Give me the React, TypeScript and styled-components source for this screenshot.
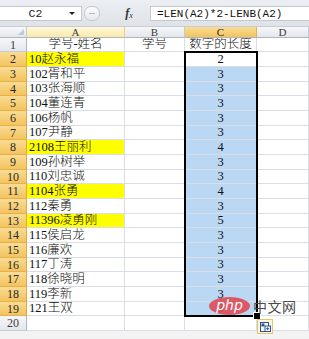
import React from 'react';
import styled, { createGlobalStyle, css } from 'styled-components';

const GlobalStyle = createGlobalStyle`
  html, body { margin: 0; padding: 0; background: #fff; }
  body { font-family: "Liberation Serif", "Noto Sans CJK SC", serif; }
  #root { width: 309px; height: 339px; }
`;

const Page = styled.div`
  position: relative;
  width: 309px;
  height: 339px;
  overflow: hidden;
  background: #f3f3f3;
  display: flex;
  flex-direction: column;
`;

const FormulaStrip = styled.div`
  height: 27px;
  box-sizing: border-box;
  padding: 6px 0 5px;
  background: linear-gradient(#eceff3, #dfe3e8);
  border-bottom: 1px solid #c9ced5;
  display: flex;
  align-items: stretch;
`;

const NameBox = styled.div`
  width: 82px;
  box-sizing: border-box;
  background: #fff;
  border: 1px solid #c3c8cf;
  border-left: none;
  display: flex;
  align-items: center;
  font-family: "Liberation Mono", monospace;
  font-size: 11.5px;
  color: #222;
`;

const NameText = styled.span`
  flex: 1;
  text-align: center;
  padding-left: 2px;
`;

const DropArrow = styled.span`
  width: 0;
  height: 0;
  margin-right: 6px;
  border-left: 3px solid transparent;
  border-right: 3px solid transparent;
  border-top: 3px solid #222;
`;

const Splitter = styled.div`
  width: 14px;
  margin-left: 2px;
  border-radius: 7px;
  border: 1px solid #c2c7ce;
  background: linear-gradient(#fbfbfc, #e6e9ed);
  display: flex;
  align-items: center;
  justify-content: center;
  &::after {
    content: '';
    width: 6px;
    height: 1px;
    background: #b5bbc3;
  }
`;

const FxBox = styled.div`
  width: 50px;
  display: flex;
  align-items: center;
  justify-content: center;
  font-family: "Liberation Serif", serif;
  font-style: italic;
  font-weight: bold;
  font-size: 12px;
  color: #333;
  padding-left: 8px;
  box-sizing: border-box;
`;

const FxSub = styled.span`
  font-size: 8px;
  font-weight: normal;
  margin-top: 3px;
`;

const FormulaInput = styled.div`
  flex: 1;
  background: #fff;
  border: 1px solid #c3c8cf;
  border-right: none;
  display: flex;
  align-items: center;
  padding-left: 6px;
  font-family: "Liberation Mono", monospace;
  font-size: 11px;
  color: #111;
`;

const Sheet = styled.div<{ $rows: string }>`
  position: relative;
  display: grid;
  grid-template-columns: 27px 98px 60px 72px 52px;
  grid-template-rows: ${(p) => p.$rows};
  background: #fff;
`;

type HeadState = 'plain' | 'sel' | 'hover';

const headBg = {
  plain: css`
    background: linear-gradient(#f6f7f9, #e3e7ec);
    border-color: #c6ccd4;
    color: #3c3c3c;
  `,
  sel: css`
    background: linear-gradient(#f9dc94, #f3c35e);
    border-color: #e8b04a;
    color: #2a2a2a;
  `,
  hover: css`
    background: linear-gradient(#fff8dc, #fbe9a8);
    border-color: #e9cf86;
    color: #3c3c3c;
  `,
};

const Corner = styled.div`
  position: relative;
  box-sizing: border-box;
  background: linear-gradient(#f6f7f9, #e3e7ec);
  border-right: 1px solid #c6ccd4;
  border-bottom: 1px solid #aeb6c0;
  &::after {
    content: '';
    position: absolute;
    right: 2px;
    bottom: 2px;
    border-left: 6px solid transparent;
    border-bottom: 6px solid #c5cad1;
  }
`;

const ColHead = styled.div<{ $state: HeadState }>`
  box-sizing: border-box;
  border-right: 1px solid;
  border-bottom: 1px solid;
  ${(p) => headBg[p.$state]}
  border-bottom-color: #aeb6c0;
  display: flex;
  align-items: center;
  justify-content: center;
  font-family: "Liberation Serif", serif;
  font-size: 11px;
  line-height: 1;
`;

const RowHead = styled.div<{ $state: HeadState }>`
  box-sizing: border-box;
  border-right: 1px solid #aeb6c0;
  border-bottom: 1px solid;
  ${(p) => headBg[p.$state]}
  border-right-color: ${(p) => (p.$state === 'sel' ? '#e0a847' : '#aeb6c0')};
  display: flex;
  align-items: center;
  justify-content: center;
  font-family: "Liberation Serif", serif;
  font-size: 12px;
  line-height: 1;
`;

const Cell = styled.div<{ $fill?: string; $align?: 'left' | 'center' }>`
  box-sizing: border-box;
  border-right: 1px solid #dadde3;
  border-bottom: 1px solid #dadde3;
  background: ${(p) => p.$fill || '#fff'};
  display: flex;
  align-items: center;
  justify-content: ${(p) => (p.$align === 'center' ? 'center' : 'flex-start')};
  padding-left: ${(p) => (p.$align === 'center' ? '0' : '2px')};
  font-family: "Liberation Serif", "Noto Sans CJK SC", serif;
  font-weight: 300;
  font-size: 12.5px;
  color: #111;
  white-space: nowrap;
  overflow: hidden;
  line-height: 1;
`;

const Selection = styled.div`
  position: absolute;
  left: 184px;
  top: 24px;
  width: 74px;
  height: 266px;
  box-sizing: border-box;
  border: 2px solid #000;
  pointer-events: none;
`;

const FillHandle = styled.div`
  position: absolute;
  left: 254px;
  top: 286px;
  width: 6px;
  height: 6px;
  box-sizing: border-box;
  background: #000;
  outline: 1px solid #fff;
`;

const Footer = styled.div`
  flex: 1;
  background: #f3f3f3;
`;

const PasteIcon = styled.div`
  position: absolute;
  left: 257px;
  top: 319px;
  width: 16px;
  height: 15px;
  box-sizing: border-box;
  border: 1px solid #e2c773;
  background: #fdf7dc;
  display: flex;
  align-items: center;
  justify-content: center;
`;

const Watermark = styled.div`
  position: absolute;
  left: 209px;
  top: 297px;
  display: flex;
  align-items: center;
  gap: 3px;
  pointer-events: none;
`;

const PhpBadge = styled.div`
  width: 41px;
  height: 18px;
  border-radius: 50%;
  background: rgba(222, 72, 82, 0.88);
  display: flex;
  align-items: center;
  justify-content: center;
  color: #fff;
  font-family: "DejaVu Sans", sans-serif;
  font-style: italic;
  font-size: 14px;
  line-height: 1;
  padding-bottom: 2px;
  box-sizing: border-box;
`;

const WmText = styled.span`
  font-family: "Noto Sans CJK SC", sans-serif;
  font-size: 14px;
  color: #4a4a4a;
  line-height: 1;
  letter-spacing: 0.5px;
`;

const names = [
  '10赵永福',
  '102胥和平',
  '103张海顺',
  '104董连青',
  '106杨帆',
  '107尹静',
  '2108王丽利',
  '109孙树举',
  '110刘忠诚',
  '1104张勇',
  '112秦勇',
  '11396凌勇刚',
  '115侯启龙',
  '116廉欢',
  '117丁涛',
  '118徐晓明',
  '119李新',
  '121王双',
];

const yellowRows = new Set([2, 8, 11, 13]);

const calc = (s: string) => {
  const len = [...s].length;
  const lenb = [...s].reduce((a, ch) => a + (ch.charCodeAt(0) > 255 ? 2 : 1), 0);
  return len * 2 - lenb;
};

const bodyHeights = Array.from({ length: 18 }, (_, i) => (i % 3 === 2 ? 14 : 15));
const rowTemplate = ['11px', '14px', ...bodyHeights.map((h) => `${h}px`), '15px'].join(' ');

export default function App() {
  return (
    <>
      <GlobalStyle />
      <Page>
        <FormulaStrip>
          <NameBox>
            <NameText>C2</NameText>
            <DropArrow />
          </NameBox>
          <Splitter />
          <FxBox>
            f<FxSub>x</FxSub>
          </FxBox>
          <FormulaInput>=LEN(A2)*2-LENB(A2)</FormulaInput>
        </FormulaStrip>
        <Sheet $rows={rowTemplate}>
          <Corner />
          <ColHead $state="hover">A</ColHead>
          <ColHead $state="plain">B</ColHead>
          <ColHead $state="sel">C</ColHead>
          <ColHead $state="plain">D</ColHead>

          <RowHead $state="plain">1</RowHead>
          <Cell $align="center">学号-姓名</Cell>
          <Cell $align="center">学号</Cell>
          <Cell $align="center">数字的长度</Cell>
          <Cell />

          {names.map((n, i) => {
            const r = i + 2;
            return (
              <React.Fragment key={r}>
                <RowHead $state="sel">{r}</RowHead>
                <Cell $fill={yellowRows.has(r) ? '#ffff00' : undefined}>{n}</Cell>
                <Cell />
                <Cell $align="center" $fill={r === 2 ? '#fff' : '#bad7f3'}>
                  {calc(n)}
                </Cell>
                <Cell />
              </React.Fragment>
            );
          })}

          <RowHead $state="plain">20</RowHead>
          <Cell />
          <Cell />
          <Cell />
          <Cell />

          <Selection />
          <FillHandle />
        </Sheet>
        <Footer />
        <PasteIcon>
          <svg width="11" height="10" viewBox="0 0 11 10">
            <rect x="0.5" y="0.5" width="8" height="9" fill="#fff" stroke="#2b4f9a" />
            <rect x="1.5" y="1.5" width="3" height="3" fill="#2b4f9a" />
            <rect x="5" y="4" width="5.5" height="5.5" fill="#fff" stroke="#2b4f9a" strokeWidth="1" />
            <path d="M7.7 5.2v3M6.2 6.7h3" stroke="#2b4f9a" strokeWidth="1" />
          </svg>
        </PasteIcon>
        <Watermark>
          <PhpBadge>php</PhpBadge>
          <WmText>中文网</WmText>
        </Watermark>
      </Page>
    </>
  );
}
